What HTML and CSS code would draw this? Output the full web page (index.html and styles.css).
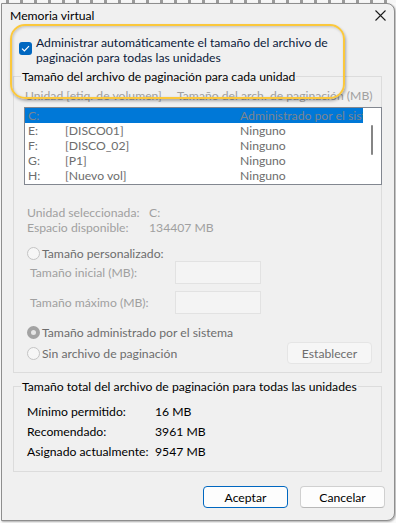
FILE: index.html
```html
<!DOCTYPE html>
<html lang="es">
<head>
<meta charset="UTF-8">
<title>Memoria virtual</title>
<link rel="stylesheet" href="styles.css">
</head>
<body>

<div class="behind"></div>

<div class="dialog">
    <div class="titlebar">
        <span>Memoria virtual</span>
        <svg class="close" width="11" height="11" viewBox="0 0 11 11">
            <path d="M0.5 0.5 L10.5 10.5 M10.5 0.5 L0.5 10.5" stroke="#1b1b1b" stroke-width="1.1" fill="none"/>
        </svg>
    </div>

    <div class="content">
        <div class="highlight"></div> <!-- marco amarillo de la captura -->

        <label class="auto">
            <span class="check">
                <svg width="9" height="7" viewBox="0 0 9 7"><path d="M1 3.6 L3.4 6 L8 1.2" stroke="#fff" stroke-width="1.2" fill="none"/></svg>
            </span>
            <span>Administrar automáticamente el tamaño del archivo de<br>paginación para todas las unidades</span>
        </label>

        <fieldset class="group drives">
            <legend>Tamaño del archivo de paginación para cada unidad</legend>

            <div class="cols">
                <span>Unidad [etiq. de volumen]</span>
                <span>Tamaño del arch. de paginación (MB)</span>
            </div>

            <div class="list">
                <div class="rows">
                    <div class="row selected"><span>C:</span><span></span><span>Administrado por el sistema</span></div>
                    <div class="row"><span>E:</span><span>[DISCO01]</span><span>Ninguno</span></div>
                    <div class="row"><span>F:</span><span>[DISCO_02]</span><span>Ninguno</span></div>
                    <div class="row"><span>G:</span><span>[P1]</span><span>Ninguno</span></div>
                    <div class="row"><span>H:</span><span>[Nuevo vol]</span><span>Ninguno</span></div>
                </div>
                <div class="scrollbar"><div class="thumb"></div></div>
            </div>

            <div class="info">
                <span>Unidad seleccionada:</span><span>C:</span>
                <span>Espacio disponible:</span><span>134407 MB</span>
            </div>

            <div class="radio custom"><span class="dot"></span>Tamaño personalizado:</div>

            <div class="sizes">
                <span>Tamaño inicial (MB):</span><span class="field"></span>
                <span>Tamaño máximo (MB):</span><span class="field"></span>
            </div>

            <div class="radio system"><span class="dot on"></span>Tamaño administrado por el sistema</div>

            <div class="last-row">
                <div class="radio"><span class="dot"></span>Sin archivo de paginación</div>
                <button class="btn btn-set" disabled>Establecer</button>
            </div>
        </fieldset>

        <fieldset class="group totals">
            <legend>Tamaño total del archivo de paginación para todas las unidades</legend>
            <div class="total-grid">
                <span>Mínimo permitido:</span><span>16 MB</span>
                <span>Recomendado:</span><span>3961 MB</span>
                <span>Asignado actualmente:</span><span>9547 MB</span>
            </div>
        </fieldset>

        <div class="buttons">
            <button class="btn btn-ok">Aceptar</button>
            <button class="btn">Cancelar</button>
        </div>
    </div>
</div>

</body>
</html>
```

FILE: styles.css
```css
* {
    box-sizing: border-box;
}

html, body {
    margin: 0;
}

body {
    width: 396px;
    height: 523px;
    overflow: hidden;
    background-color: #fafafa;
    font-family: Lato, "Segoe UI", sans-serif;
    font-size: 12.2px;
    line-height: 15px;
    color: #000;
    white-space: nowrap;
}

.behind {
    height: 3px;
    background: repeating-linear-gradient(90deg, #f4f4f4 0 6px, #5a5a5a 6px 9px, #f4f4f4 9px 14px);
    opacity: 0.6;
}

.dialog {
    position: relative;
    margin-left: 1px;
    width: 394px;
    background-color: #f0f0f0;
    border: 1px solid #8e8e8e;
    border-radius: 0 8px 8px 0;
    box-shadow: 1px 1px 2px rgba(0, 0, 0, 0.3);
}

.titlebar {
    height: 24px;
    padding: 0 8px 2px 8px;
    display: flex;
    align-items: center;
    justify-content: space-between;
}

.content {
    padding: 7px 12px 12px 11px;
}

.highlight {
    position: absolute;
    left: 8px;
    top: 20px;
    width: 335px;
    height: 75px;
    border: 2px solid #fbc83c;
    border-radius: 15px;
    box-shadow: 1px 2px 3px rgba(0, 0, 0, 0.3), inset 1px 1px 3px rgba(0, 0, 0, 0.2);
    pointer-events: none;
}

.auto {
    display: flex;
    gap: 4px;
    color: #0c1a3a;
}

.check {
    flex: none;
    width: 13px;
    height: 13px;
    margin: 7px 0 0 6px;
    border-radius: 3px;
    background-color: #0067c0;
    display: flex;
    align-items: center;
    justify-content: center;
}

.group {
    margin: 4px 0 0;
    padding: 0 9px 8px 10px;
    border: 1px solid #dcdcdc;
    min-width: 0;
}

.group legend {
    margin-left: -3px;
    padding: 0 1px;
}

.cols {
    display: grid;
    grid-template-columns: 152px auto;
    margin-top: 4px;
    padding-left: 1px;
    color: #a0a0a0;
}

.list {
    display: flex;
    width: 358px;
    height: 78px;
    margin-top: 4px;
    border: 1px solid #828790;
    background-color: #fff;
}

.rows {
    width: 338px;
    overflow: hidden;
}

.row {
    display: grid;
    grid-template-columns: 37px 175px auto;
    height: 15px;
    padding-left: 3px;
    color: #6d6d6d;
}

.row.selected {
    background-color: #0078d7;
    color: #7c8590;
}

.scrollbar {
    flex: 1;
    position: relative;
}

.thumb {
    position: absolute;
    left: 8px;
    top: 17px;
    width: 2px;
    height: 30px;
    border-radius: 1px;
    background-color: #858585;
}

.info {
    display: grid;
    grid-template-columns: 122px auto;
    margin-top: 20px;
    padding-left: 3px;
    color: #a0a0a0;
}

.radio {
    display: flex;
    align-items: center;
    gap: 2px;
    height: 15px;
    padding-left: 3px;
    color: #6d6d6d;
}

.dot {
    flex: none;
    width: 13px;
    height: 13px;
    border-radius: 50%;
    border: 1px solid #c4c4c4;
    background-color: #f6f6f6;
}

.dot.on {
    border: 4px solid #a3a3a3;
    background-color: #e6e6e6;
}

.custom {
    margin-top: 11px;
}

.sizes {
    display: grid;
    grid-template-columns: 145px 86px;
    grid-auto-rows: 23px;
    row-gap: 7px;
    align-items: center;
    padding-left: 6px;
    color: #a0a0a0;
}

.field {
    height: 23px;
    border: 1px solid #e2e2e2;
    background-color: #f4f4f4;
}

.system {
    margin-top: 11px;
}

.last-row {
    display: flex;
    align-items: center;
    justify-content: space-between;
    height: 22px;
    margin-top: 2px;
}

.btn {
    height: 22px;
    padding: 0;
    font-family: inherit;
    font-size: 12.2px;
    color: #000;
    background-color: #fdfdfd;
    border: 1px solid #d0d0d0;
    border-bottom-color: #b8b8b8;
    border-radius: 4px;
}

.btn-set {
    width: 85px;
    color: #6d6d6d;
    background-color: #f6f6f6;
    border-color: #e5e5e5;
}

.totals {
    margin-top: 6px;
    padding-bottom: 10px;
}

.total-grid {
    display: grid;
    grid-template-columns: 128px auto;
    grid-auto-rows: 20px;
    align-items: center;
    margin-top: 7px;
    padding-left: 3px;
}

.buttons {
    display: flex;
    justify-content: flex-end;
    gap: 12px;
    margin: 14px -3px 0 0;
}

.buttons .btn {
    width: 85px;
}

.btn-ok {
    width: 83px;
    border-color: #0067c0;
}
```
